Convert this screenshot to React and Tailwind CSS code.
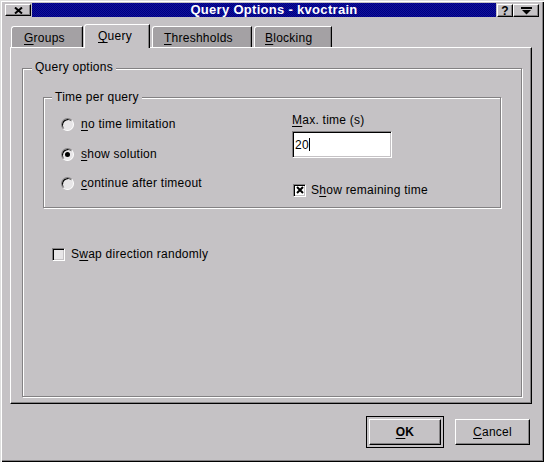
const raised = 'border border-t-white border-l-white border-r-black border-b-black shadow-[inset_-1px_-1px_0_#838183]';
const sunken = 'border border-t-[#838183] border-l-[#838183] border-r-white border-b-white shadow-[inset_1px_1px_0_#000,inset_-1px_-1px_0_#c5c2c5]';
const etched = 'border border-[#838183] shadow-[inset_1px_1px_0_#fff,1px_1px_0_#fff]';

function U({ children }) {
  return <span className="underline underline-offset-[2px] decoration-1">{children}</span>;
}

function Radio({ checked, children }) {
  return (
    <div className="h-[20px] flex items-center gap-[7px]">
      <div className="w-[13px] h-[13px] rounded-full border border-t-[#838183] border-l-[#838183] border-r-white border-b-white bg-[#e8e6e8] shadow-[inset_1px_1px_0_#000] flex items-center justify-center">
        {checked && <div className="w-[5px] h-[5px] rounded-full bg-black" />}
      </div>
      <span>{children}</span>
    </div>
  );
}

function Check({ checked }) {
  return (
    <div className={`w-[13px] h-[13px] ${sunken} ${checked ? 'bg-white' : 'bg-[#e8e6e8]'} flex items-center justify-center`}>
      {checked && (
        <svg width="8" height="8" viewBox="0 0 8 8">
          <path d="M1 1L7 7M7 1L1 7" stroke="#000" strokeWidth="2" />
        </svg>
      )}
    </div>
  );
}

function Tab({ active, width, pad, gap, children }) {
  if (active) {
    return (
      <div
        className={`relative z-10 h-[24px] -mb-[1px] ${gap} ${width} ${pad} pt-[4px] bg-[#c5c2c5] border-l border-t border-white border-r border-r-black rounded-tl-[3px] shadow-[inset_-1px_0_0_#838183]`}
      >
        {children}
      </div>
    );
  }
  return (
    <div
      className={`h-[21px] ${gap} ${width} ${pad} pt-[4px] bg-[#a4a1a4] border-l border-t border-white border-r border-r-black rounded-tl-[3px] shadow-[inset_-1px_0_0_#838183]`}
    >
      {children}
    </div>
  );
}

export default function App() {
  return (
    <div className="w-[544px] h-[462px] bg-[#c5c2c5] text-black text-[12px] leading-[14px] tracking-[0.25px] font-['Liberation_Sans',Arial,sans-serif] flex flex-col shadow-[inset_1px_1px_0_#dedede,inset_2px_2px_0_#fff,inset_-1px_-1px_0_#000,inset_-2px_-2px_0_#838183] overflow-hidden">
      {/* Title bar */}
      <div className="flex items-start mt-[3px] h-[14px]">
        <div className={`ml-[5px] mt-[1px] w-[26px] h-[12px] bg-[#c5c2c5] ${raised} flex items-center justify-center`}>
          <svg width="9" height="7" viewBox="0 0 9 7">
            <path d="M1 0.5L8 6.5M8 0.5L1 6.5" stroke="#000" strokeWidth="2" />
          </svg>
        </div>
        <div className="ml-[1px] w-[464px] h-[14px] bg-[#000088] bg-[conic-gradient(#000080_25%,#10109c_0_50%,#000080_0_75%,#10109c_0)] bg-[length:2px_2px] flex items-center justify-center pl-[20px] text-white font-bold text-[13px] tracking-[0.3px]">
          Query Options - kvoctrain
        </div>
        <div className={`ml-[1px] mt-[1px] w-[16px] h-[13px] bg-[#c5c2c5] ${raised} flex items-center justify-center font-bold leading-none`}>
          ?
        </div>
        <div className={`mt-[1px] w-[26px] h-[13px] bg-[#c5c2c5] ${raised} flex items-center justify-center`}>
          <svg width="11" height="8" viewBox="0 0 11 8">
            <rect x="0" y="0" width="11" height="2" fill="#000" />
            <path d="M1 3H10L5.5 7.5Z" fill="#000" />
          </svg>
        </div>
      </div>

      {/* Tabs */}
      <div className="mt-[7px] h-[23px] ml-[10px] flex items-end">
        <Tab width="w-[72px]" pad="pl-[12px]" gap="ml-[1px]"><U>G</U>roups</Tab>
        <Tab active width="w-[66px]" pad="pl-[13px]" gap="ml-[1px]"><U>Q</U>uery</Tab>
        <Tab width="w-[100px]" pad="pl-[11px]" gap="ml-[2px]"><U>T</U>hreshholds</Tab>
        <Tab width="w-[78px]" pad="pl-[10px]" gap="ml-[2px]"><U>B</U>locking</Tab>
      </div>

      {/* Tab page */}
      <div className="ml-[10px] w-[522px] h-[357px] border border-t-white border-l-white border-r-black border-b-black shadow-[inset_-1px_-1px_0_#838183] pl-[11px] pt-[20px]">
        <div className={`relative w-[500px] h-[329px] ${etched}`}>
          <span className="absolute left-[9px] -top-[9px] px-[3px] bg-[#c5c2c5]">Query options</span>

          <div className={`relative mt-[28px] ml-[20px] w-[458px] h-[111px] ${etched} flex`}>
            <span className="absolute left-[8px] -top-[8px] px-[3px] bg-[#c5c2c5]">Time per query</span>

            <div className="w-[248px] pl-[17px] pt-[16px] flex flex-col">
              <Radio><U>n</U>o time limitation</Radio>
              <div className="mt-[10px]">
                <Radio checked><U>s</U>how solution</Radio>
              </div>
              <div className="mt-[9px]">
                <Radio><U>c</U>ontinue after timeout</Radio>
              </div>
            </div>

            <div className="pt-[15px] flex flex-col">
              <span><U>M</U>ax. time (s)</span>
              <div className={`mt-[4px] w-[100px] h-[27px] bg-white ${sunken} flex items-center pl-[2px]`}>
                <span>20</span>
                <span className="w-[1px] h-[13px] bg-black" />
              </div>
              <div className="mt-[25px] ml-[1px] h-[14px] flex items-center gap-[5px]">
                <Check checked />
                <span>S<U>h</U>ow remaining time</span>
              </div>
            </div>
          </div>

          <div className="mt-[39px] ml-[29px] h-[14px] flex items-center gap-[6px]">
            <Check />
            <span>S<U>w</U>ap direction randomly</span>
          </div>
        </div>
      </div>

      {/* Buttons */}
      <div className="mt-[12px] h-[32px] flex items-center justify-end pr-[14px] gap-[11px]">
        <div className="w-[78px] h-[32px] border border-black p-[2px]">
          <div className={`w-full h-full ${raised} flex items-center justify-center font-bold`}>
            <U>O</U>K
          </div>
        </div>
        <div className={`w-[75px] h-[26px] ${raised} flex items-center justify-center`}>
          <U>C</U>ancel
        </div>
      </div>
    </div>
  );
}
